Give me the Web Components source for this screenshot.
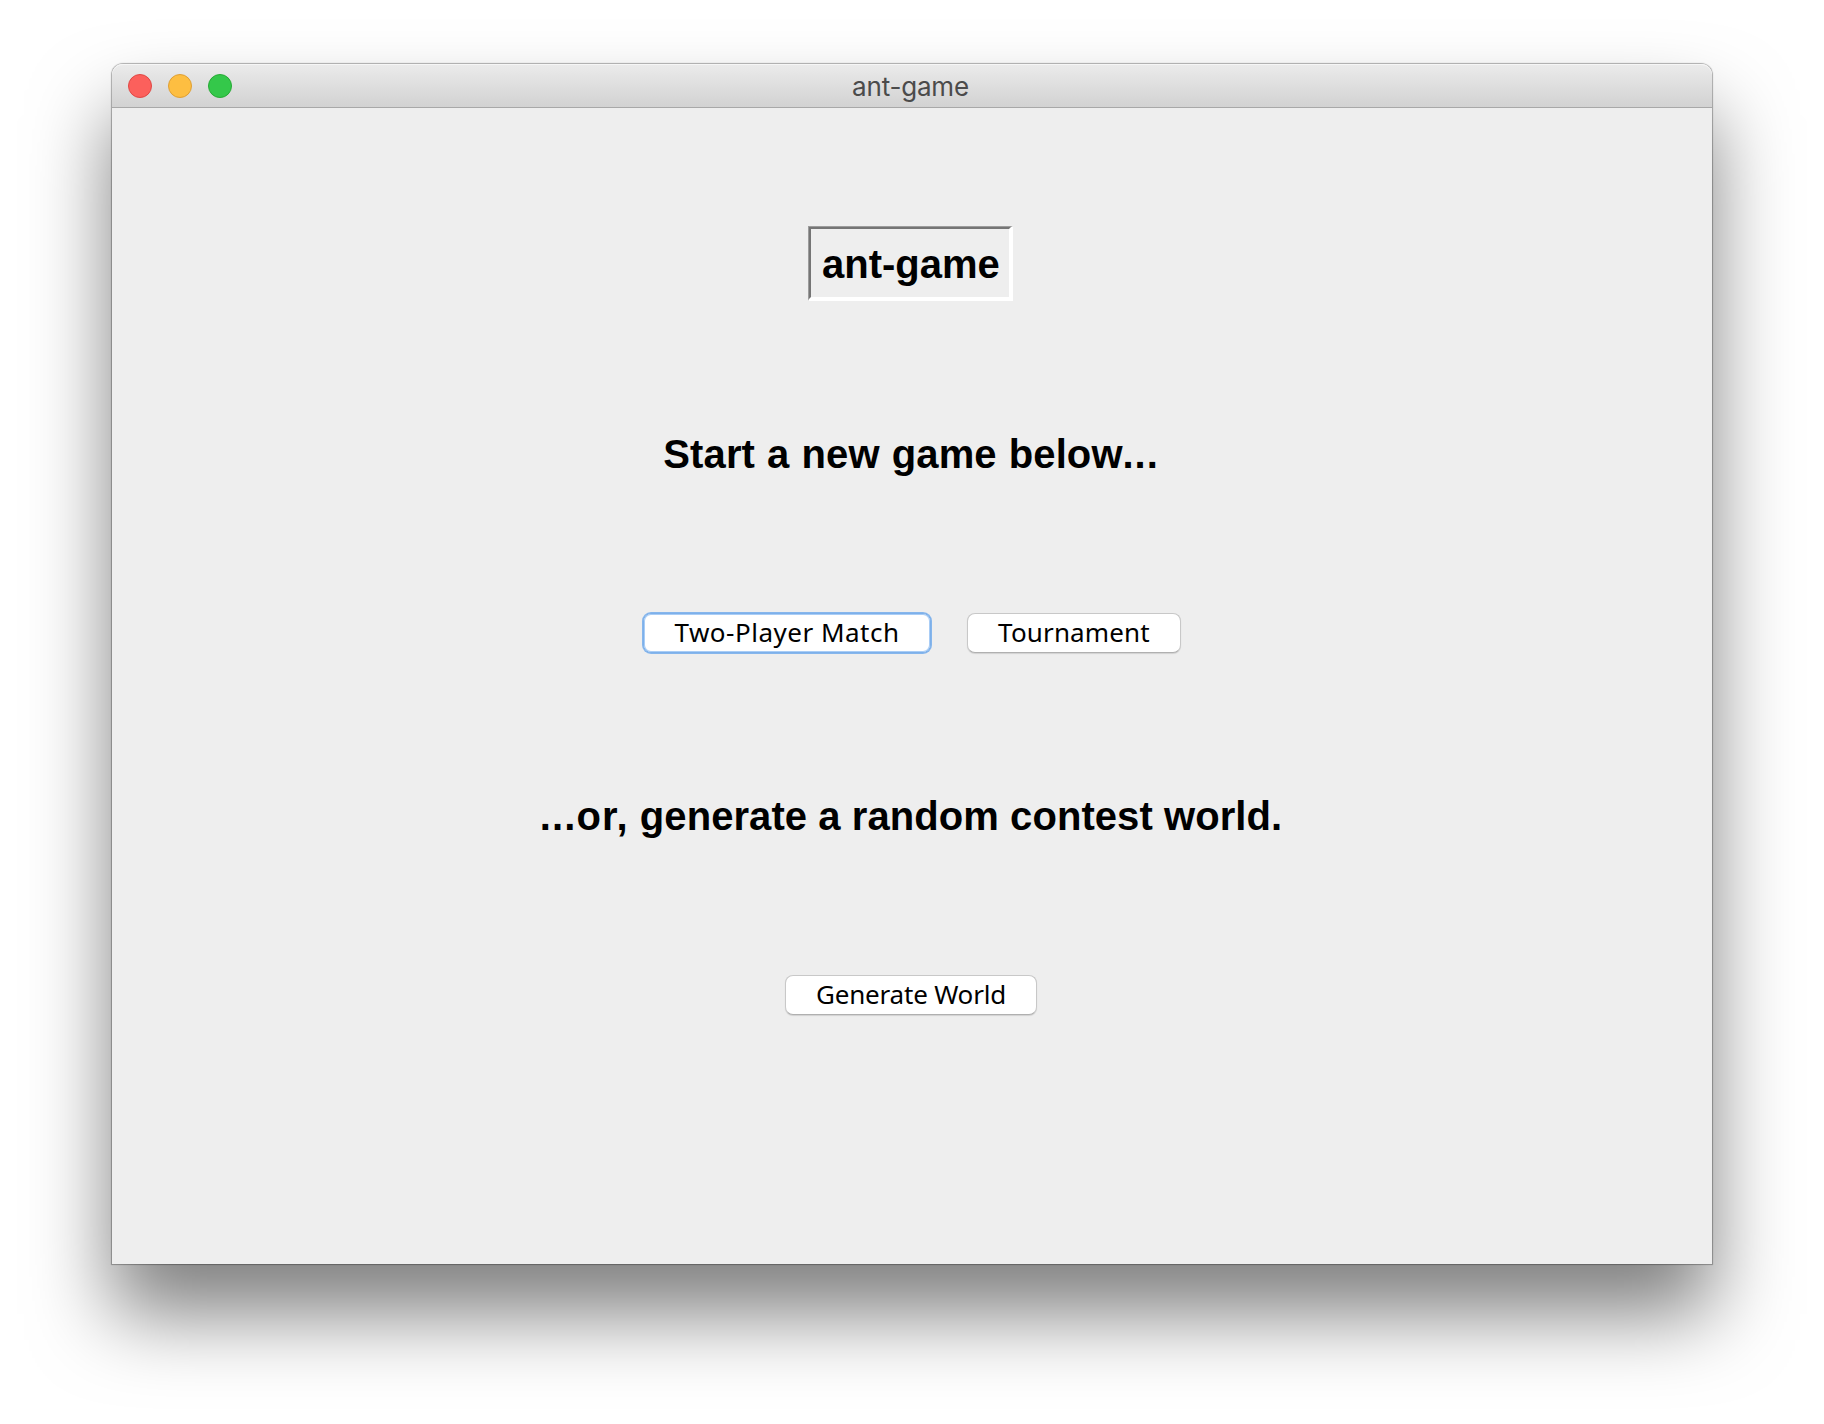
<!DOCTYPE html>
<html lang="en">
<head>
<meta charset="utf-8">
<title>ant-game</title>
<style>
html, body { margin: 0; background: #fff; }
body { width: 1824px; height: 1424px; overflow: hidden; font-family: "Liberation Sans", Arial, sans-serif; color: #000; }
</style>
</head>
<body>
<mac-window>
  <title-bar slot="bar">ant-game</title-bar>
  <bevel-label style="margin-top:118px">ant-game</bevel-label>
  <text-label style="margin-top:123px;letter-spacing:.1px;word-spacing:.9px">Start a new game below<span style="letter-spacing:.9px">...</span></text-label>
  <button-row style="margin-top:129px;padding-left:2px">
    <push-button focused style="width:288px;--track:.5px">Two-Player Match</push-button>
    <push-button style="width:214px;--track:.15px">Tournament</push-button>
  </button-row>
  <text-label style="margin-top:133px;letter-spacing:.07px"><span style="letter-spacing:1.1px">...or,</span> generate a random contest world.</text-label>
  <button-row style="margin-top:129px">
    <push-button style="width:252px;--track:-.2px">Generate World</push-button>
  </button-row>
</mac-window>
<script>
const define = (name, html) => customElements.define(name, class extends HTMLElement {
  constructor() {
    super();
    this.attachShadow({ mode: 'open' }).innerHTML = html;
  }
});

define('mac-window', `<style>
:host { display: block; padding: 64px 112px 160px; }
.frame { display: flex; flex-direction: column; height: 1200px; border-radius: 11px 11px 0 0; background: #eee;
  box-shadow: 0 0 1px 1px rgba(0,0,0,.3), 0 50px 80px rgba(0,0,0,.5); }
main { display: flex; flex-direction: column; align-items: center; padding-right: 2px; }
</style><div class="frame"><slot name="bar"></slot><main><slot></slot></main></div>`);

define('title-bar', `<style>
:host { display: grid; grid-template-columns: 1fr auto 1fr; align-items: center; height: 44px; box-sizing: border-box;
  border-bottom: 1px solid #a8a8a8; border-radius: 11px 11px 0 0; padding: 0 16px;
  background: linear-gradient(#ebebeb, #d2d2d2); box-shadow: inset 0 1px #f6f6f6;
  font: 26px/43px Inter, sans-serif; color: #4b4b4b; }
.lights { display: flex; gap: 16px; }
svg { display: block; }
.name { letter-spacing: -.2px; padding: 2px 3px 0 0; line-height: 41px; }
</style>
<div class="lights">
<svg width="24" height="24"><circle cx="12" cy="12" r="11.5" fill="#fc605c" stroke="#df4845"/></svg>
<svg width="24" height="24"><circle cx="12" cy="12" r="11.5" fill="#fdbe41" stroke="#de9f34"/></svg>
<svg width="24" height="24"><circle cx="12" cy="12" r="11.5" fill="#34c84a" stroke="#27aa35"/></svg>
</div><div class="name"><slot></slot></div>`);

define('bevel-label', `<style>
:host { display: block; width: 205px; height: 75px; margin-right: 1px; box-sizing: border-box; font: bold 40px/70px "Liberation Sans", Arial, sans-serif;
  border: solid; border-width: 1px 2px 2px 1px; border-color: #9c9c9c #fff #fff #9c9c9c; }
.inner { height: 72px; box-sizing: border-box; border: 2px solid; border-color: #757575 #fff #fff #757575; padding-left: 11px; white-space: nowrap; }
</style><div class="inner"><slot></slot></div>`);

define('text-label', `<style>
:host { display: block; font-weight: bold; font-size: 40px; line-height: 60px; white-space: nowrap; }
</style><slot></slot>`);

define('button-row', `<style>
:host { display: flex; justify-content: center; gap: 36px; }
</style><slot></slot>`);

define('push-button', `<style>
:host { display: flex; justify-content: center; height: 40px; box-sizing: border-box; border: 1px solid #c8c8c8; border-bottom-color: #b0b0b0;
  border-radius: 8px; background: #fff; box-shadow: 0 1px 1px rgba(0,0,0,.12);
  font: 26px/36px "Noto Sans", sans-serif; letter-spacing: var(--track); white-space: nowrap; }
:host([focused]) { border: 1px solid #7db0ea; box-shadow: 0 0 0 1px #86b6ec, inset 0 0 0 1px #a9cdf6; }
</style><span><slot></slot></span>`);
</script>
</body>
</html>
